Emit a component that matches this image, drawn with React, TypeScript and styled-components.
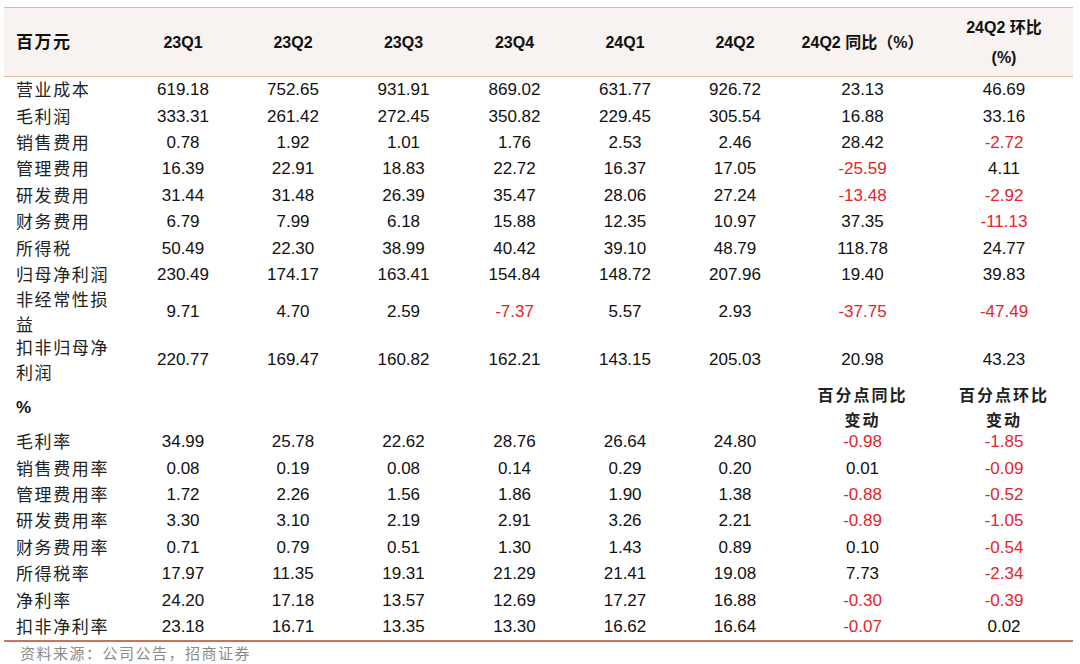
import React from "react";
import styled, { createGlobalStyle } from "styled-components";

const Global = createGlobalStyle`
  html, body { margin: 0; padding: 0; background: #fff; }
  body { width: 1080px; height: 664px; overflow: hidden; }
`;

const COLS = "124px 110px 110px 111px 111px 110px 110px 145px 138px";

const Page = styled.div`
  padding: 7px 7px 0 4px;
  width: 1069px;
`;

const Table = styled.div`
  display: flex;
  flex-direction: column;
  border-bottom: 2px solid #c4765f;
`;

const HeaderRow = styled.div`
  display: grid;
  grid-template-columns: ${COLS};
  height: 68px;
  align-items: center;
  background: #f8f2f0;
  border-top: 1.5px solid #e7b5a4;
  border-bottom: 1px solid #e7b5a4;
`;

const HeadLabel = styled.div`
  padding-left: 12px;
  font-family: "Noto Sans CJK SC", sans-serif;
  font-weight: 700;
  font-size: 17px;
  letter-spacing: 1.5px;
  color: #111;
  margin-top: -3px;
`;

const HeadCell = styled.div`
  text-align: center;
  font-family: "Liberation Sans", "Noto Sans CJK SC", sans-serif;
  font-weight: 700;
  font-size: 16px;
  line-height: 30px;
  color: #111;
  padding-top: 2px;
`;

const Row = styled.div<{ $h: number }>`
  display: grid;
  grid-template-columns: ${COLS};
  height: ${(p) => p.$h}px;
  align-items: center;
`;

const Label = styled.div`
  padding-left: 12px;
  font-family: "Noto Sans CJK SC", sans-serif;
  font-size: 17px;
  letter-spacing: 1.6px;
  line-height: 25px;
  color: #222;
  white-space: pre-line;
  margin-top: -3px;
`;

const SectionLabel = styled.div`
  padding-left: 12px;
  font-family: "Liberation Sans", sans-serif;
  font-weight: 700;
  font-size: 17px;
  color: #111;
`;

const SubHead = styled.div`
  text-align: center;
  font-family: "Noto Sans CJK SC", sans-serif;
  font-weight: 700;
  font-size: 16px;
  letter-spacing: 2px;
  line-height: 25px;
  color: #222;
  margin-top: -2px;
`;

const Num = styled.div<{ $neg?: boolean }>`
  text-align: center;
  font-family: "Liberation Sans", sans-serif;
  font-size: 17px;
  color: ${(p) => (p.$neg ? "#e3252a" : "#111")};
`;

const Source = styled.div`
  padding: 1px 0 0 16px;
  font-family: "Noto Sans CJK SC", sans-serif;
  font-size: 15px;
  line-height: 20px;
  letter-spacing: 1.5px;
  color: #8a8a8a;
`;

type R = { label: string; vals: string[]; h?: number };

const top: R[] = [
  { label: "营业成本", vals: ["619.18", "752.65", "931.91", "869.02", "631.77", "926.72", "23.13", "46.69"] },
  { label: "毛利润", vals: ["333.31", "261.42", "272.45", "350.82", "229.45", "305.54", "16.88", "33.16"] },
  { label: "销售费用", vals: ["0.78", "1.92", "1.01", "1.76", "2.53", "2.46", "28.42", "-2.72"] },
  { label: "管理费用", vals: ["16.39", "22.91", "18.83", "22.72", "16.37", "17.05", "-25.59", "4.11"] },
  { label: "研发费用", vals: ["31.44", "31.48", "26.39", "35.47", "28.06", "27.24", "-13.48", "-2.92"] },
  { label: "财务费用", vals: ["6.79", "7.99", "6.18", "15.88", "12.35", "10.97", "37.35", "-11.13"] },
  { label: "所得税", vals: ["50.49", "22.30", "38.99", "40.42", "39.10", "48.79", "118.78", "24.77"] },
  { label: "归母净利润", vals: ["230.49", "174.17", "163.41", "154.84", "148.72", "207.96", "19.40", "39.83"] },
  { label: "非经常性损\n益", h: 48, vals: ["9.71", "4.70", "2.59", "-7.37", "5.57", "2.93", "-37.75", "-47.49"] },
  { label: "扣非归母净\n利润", h: 48, vals: ["220.77", "169.47", "160.82", "162.21", "143.15", "205.03", "20.98", "43.23"] },
];

const bottom: R[] = [
  { label: "毛利率", vals: ["34.99", "25.78", "22.62", "28.76", "26.64", "24.80", "-0.98", "-1.85"] },
  { label: "销售费用率", vals: ["0.08", "0.19", "0.08", "0.14", "0.29", "0.20", "0.01", "-0.09"] },
  { label: "管理费用率", vals: ["1.72", "2.26", "1.56", "1.86", "1.90", "1.38", "-0.88", "-0.52"] },
  { label: "研发费用率", vals: ["3.30", "3.10", "2.19", "2.91", "3.26", "2.21", "-0.89", "-1.05"] },
  { label: "财务费用率", vals: ["0.71", "0.79", "0.51", "1.30", "1.43", "0.89", "0.10", "-0.54"] },
  { label: "所得税率", vals: ["17.97", "11.35", "19.31", "21.29", "21.41", "19.08", "7.73", "-2.34"] },
  { label: "净利率", vals: ["24.20", "17.18", "13.57", "12.69", "17.27", "16.88", "-0.30", "-0.39"] },
  { label: "扣非净利率", vals: ["23.18", "16.71", "13.35", "13.30", "16.62", "16.64", "-0.07", "0.02"] },
];

const heads = ["23Q1", "23Q2", "23Q3", "23Q4", "24Q1", "24Q2"];

const DataRow = ({ r }: { r: R }) => (
  <Row $h={r.h ?? 26.4}>
    <Label>{r.label}</Label>
    {r.vals.map((v, i) => (
      <Num key={i} $neg={v.startsWith("-")}>
        {v}
      </Num>
    ))}
  </Row>
);

export default function App() {
  return (
    <>
      <Global />
      <Page>
        <Table>
          <HeaderRow>
            <HeadLabel>百万元</HeadLabel>
            {heads.map((h) => (
              <HeadCell key={h}>{h}</HeadCell>
            ))}
            <HeadCell>24Q2 同比（%）</HeadCell>
            <HeadCell>
              24Q2 环比
              <br />
              (%)
            </HeadCell>
          </HeaderRow>
          {top.map((r) => (
            <DataRow key={r.label} r={r} />
          ))}
          <Row $h={45}>
            <SectionLabel>%</SectionLabel>
            <div />
            <div />
            <div />
            <div />
            <div />
            <div />
            <SubHead>
              百分点同比
              <br />
              变动
            </SubHead>
            <SubHead>
              百分点环比
              <br />
              变动
            </SubHead>
          </Row>
          {bottom.map((r) => (
            <DataRow key={r.label} r={r} />
          ))}
        </Table>
        <Source>资料来源：公司公告，招商证券</Source>
      </Page>
    </>
  );
}
